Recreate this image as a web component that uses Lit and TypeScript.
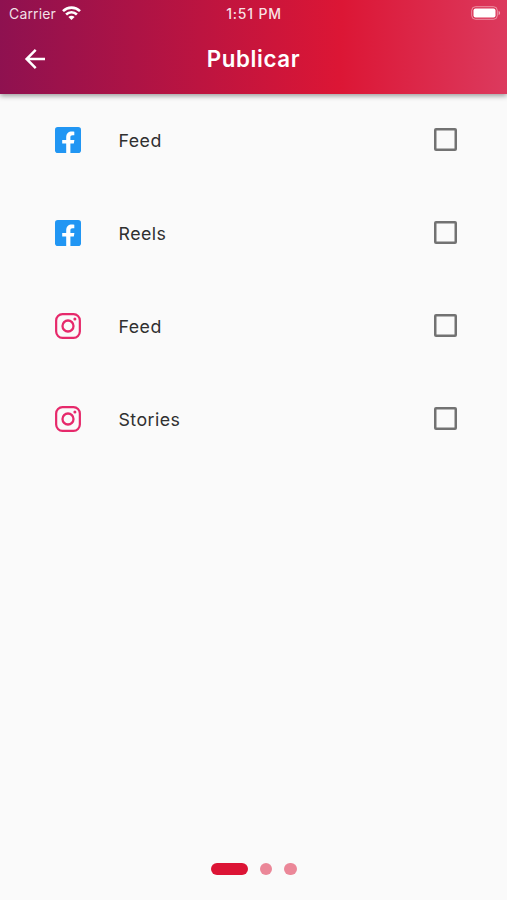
import { LitElement, html, css, svg } from "lit";
import { customElement } from "lit/decorators.js";

const facebook = svg`<svg class="brand" viewBox="0 0 26 26" width="26" height="26">
  <rect width="26" height="26" rx="2.8" fill="#2196f3"/>
  <path d="M11.2 26V16.6H7.2v-3.7h4V10.2c0-3.7 2.3-5.7 5.7-5.7.9 0 1.6.1 2.4.2v3.5h-1.6c-1.8 0-2.3.9-2.3 2v2.7h4l-.6 3.7h-3.4V26z" fill="#fff"/>
</svg>`;

const instagram = svg`<svg class="brand" viewBox="0 0 26 26" width="26" height="26" fill="none" stroke="#e6296b">
  <rect x="1.15" y="1.15" width="23.7" height="23.7" rx="6.3" stroke-width="2.2"/>
  <circle cx="13" cy="13" r="5.5" stroke-width="2.3"/>
  <circle cx="19.9" cy="6.1" r="1.5" fill="#e6296b" stroke="none"/>
</svg>`;

const rows = [
  { icon: facebook, label: "Feed" },
  { icon: facebook, label: "Reels" },
  { icon: instagram, label: "Feed" },
  { icon: instagram, label: "Stories" },
];

@customElement("app-root")
export class AppRoot extends LitElement {
  static styles = css`
    :host {
      display: flex;
      flex-direction: column;
      height: 900px;
      background: #fafafa;
      font-family: Inter, "Open Sans", sans-serif;
    }
    svg { display: block; }
    header {
      height: 94px;
      flex: none;
      color: #fff;
      background: linear-gradient(92deg, #8e1150 0%, #dc1635 67%, #dc3a5e 100%);
      box-shadow: 0 2px 5px rgba(0, 0, 0, 0.38);
    }
    .status, .bar {
      display: grid;
      grid-template-columns: 1fr auto 1fr;
      align-items: center;
    }
    .status {
      height: 27px;
      padding: 0 6px 0 9px;
      font-size: 14px;
      color: rgba(255, 255, 255, 0.88);
    }
    .carrier { display: flex; align-items: center; gap: 6px; }
    .carrier span { letter-spacing: 0.15px; }
    .carrier svg { margin-top: -1px; }
    .time {
      font-size: 14px;
      font-weight: 500;
      letter-spacing: 0.8px;
      margin-right: 2px;
    }
    .battery { justify-self: end; margin-top: -1px; }
    .bar { height: 64px; padding: 0 24px; }
    h1 {
      margin: 0;
      font-size: 22.3px;
      font-weight: 600;
      line-height: 30px;
      letter-spacing: 0.6px;
    }
    main { flex: 1; }
    .row {
      box-sizing: border-box;
      display: flex;
      align-items: center;
      height: 93px;
      padding: 0 50px 2px 55px;
    }
    .label {
      margin-left: 37.5px;
      flex: 1;
      font-size: 17.8px;
      line-height: 24px;
      letter-spacing: 0.45px;
      color: #303030;
      padding-top: 2px;
    }
    .check {
      width: 23px;
      height: 23px;
      border-radius: 2px;
      box-shadow: inset 0 0 0 2.5px #727272;
    }
    footer {
      display: flex;
      align-items: center;
      justify-content: center;
      gap: 12px;
      height: 12px;
      padding-bottom: 25px;
    }
    .dot {
      width: 12.5px;
      height: 12.5px;
      border-radius: 7px;
      background: #eb8798;
    }
    .dot.active { width: 37px; background: #dc1435; }
  `;

  render() {
    return html`
      <header>
        <div class="status">
          <div class="carrier">
            <span>Carrier</span>
            <svg width="19" height="14" viewBox="0 0 19 14" fill="none" stroke="#fff" stroke-width="2.6">
              <path d="M1 5.1C5.8.4 13.2.4 18 5.1"/>
              <path d="M4.1 8.5c3.1-3.1 7.7-3.1 10.8 0"/>
              <path d="M9.5 13.9 6.4 10.9c1.7-1.6 4.5-1.6 6.2 0z" fill="#fff" stroke="none"/>
            </svg>
          </div>
          <div class="time">1:51 PM</div>
          <svg class="battery" width="30" height="14" viewBox="0 0 30 14">
            <rect x=".7" y=".7" width="25.6" height="12.6" rx="3.8" fill="none" stroke="#fff" stroke-opacity=".45"/>
            <rect x="2.5" y="2.5" width="22" height="9" rx="2" fill="#fff"/>
            <path d="M27.6 4.8c2 .8 2 3.6 0 4.4z" fill="#fff" fill-opacity=".55"/>
          </svg>
        </div>
        <div class="bar">
          <svg width="22" height="22" viewBox="0 0 22 22" fill="none" stroke="#fff" stroke-width="2.5">
            <path d="M11.7 1.8 2.6 11l9.1 9.2M2.6 11H21"/>
          </svg>
          <h1>Publicar</h1>
        </div>
      </header>
      <main>
        ${rows.map((r) => html`
          <div class="row">
            ${r.icon}
            <span class="label">${r.label}</span>
            <span class="check"></span>
          </div>`)}
      </main>
      <footer>
        <span class="dot active"></span><span class="dot"></span><span class="dot"></span>
      </footer>
    `;
  }
}
